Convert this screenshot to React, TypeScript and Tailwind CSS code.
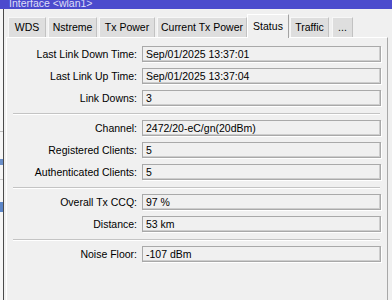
const tabs = [
  { label: "WDS", cls: "ml-[4px] w-[38px]" },
  { label: "Nstreme", cls: "ml-[2px] w-[49px]" },
  { label: "Tx Power", cls: "ml-[2px] w-[56px]" },
  { label: "Current Tx Power", cls: "ml-[2px] w-[90px]" },
  { label: "Status", cls: "ml-0 w-[42px]", active: true },
  { label: "Traffic", cls: "ml-[1px] w-[39px]" },
  { label: "...", cls: "ml-[3px] w-[21px]" },
];

const groups = [
  [
    ["Last Link Down Time:", "Sep/01/2025 13:37:01"],
    ["Last Link Up Time:", "Sep/01/2025 13:37:04"],
    ["Link Downs:", "3"],
  ],
  [
    ["Channel:", "2472/20-eC/gn(20dBm)"],
    ["Registered Clients:", "5"],
    ["Authenticated Clients:", "5"],
  ],
  [
    ["Overall Tx CCQ:", "97 %"],
    ["Distance:", "53 km"],
  ],
  [["Noise Floor:", "-107 dBm"]],
];

function Field({ label, value }: { label: string; value: string }) {
  return (
    <div className="flex items-center h-[16px]">
      <div className="w-[130px] text-right whitespace-nowrap leading-none">{label}</div>
      <div className="ml-[5px] w-[239px] h-[16px] flex items-center pl-[3px] border border-[#a9a9a9] shadow-[inset_-1px_-1px_0_#cdcdcd,1px_1px_0_#ffffff] whitespace-nowrap leading-none">
        {value}
      </div>
    </div>
  );
}

export default function App() {
  return (
    <div className="w-[392px] h-[300px] overflow-hidden flex flex-col bg-[#f0f0f0] text-black text-[10.5px] font-['Liberation_Sans',Arial,sans-serif]">
      {/* title bar, cut off at the top */}
      <div className="h-[9px] shrink-0 overflow-hidden bg-[#4b4bcd] pl-[9px]">
        <div className="-mt-[2px] leading-[11px] text-[#dedef7] whitespace-nowrap">Interface &lt;wlan1&gt;</div>
      </div>

      <div className="flex flex-1 min-h-0">
        {/* sliver of the window behind */}
        <div className="w-[3px] shrink-0 bg-[#f6f6f6] flex flex-col">
          <div className="mt-[122px] h-px bg-[#bcbcbc]" />
          <div className="mt-[27px] h-[6px] bg-[#6b8fc9]" />
          <div className="mt-[14px] h-px bg-[#c9c9c9]" />
          <div className="mt-[22px] h-[10px] bg-[#5c86c8]" />
        </div>
        <div className="w-px shrink-0 bg-[#4a4a4a]" />

        {/* window body */}
        <div className="flex-1 flex flex-col pt-[5px]">
          <div className="flex items-end h-[23px]">
            {tabs.map((t) =>
              t.active ? (
                <div
                  key={t.label}
                  className={`${t.cls} relative z-10 h-[24px] -mb-px flex items-center justify-center bg-[#f0f0f0] border-l border-t border-white border-r border-r-[#a3a3a3] whitespace-nowrap`}
                >
                  {t.label}
                </div>
              ) : (
                <div
                  key={t.label}
                  className={`${t.cls} h-[20px] flex items-center justify-center bg-[#dedede] border-l border-t border-[#f7f7f7] border-r border-r-[#c2c2c2] whitespace-nowrap`}
                >
                  {t.label}
                </div>
              )
            )}
          </div>

          <div className="ml-[2px] w-[382px] flex-1 border-t border-l border-white border-r border-r-[#a8a8a8] pt-[8px] flex flex-col">
            {groups.map((g, gi) => (
              <div key={gi} className="flex flex-col">
                {gi > 0 && (
                  <div className="ml-[6px] w-[367px] mt-[7px] mb-[5px] border-t border-[#c4c4c4] border-b border-b-white" />
                )}
                <div className="flex flex-col gap-[6px]">
                  {g.map(([l, v]) => (
                    <Field key={l} label={l} value={v} />
                  ))}
                </div>
              </div>
            ))}
          </div>
        </div>
      </div>
    </div>
  );
}
